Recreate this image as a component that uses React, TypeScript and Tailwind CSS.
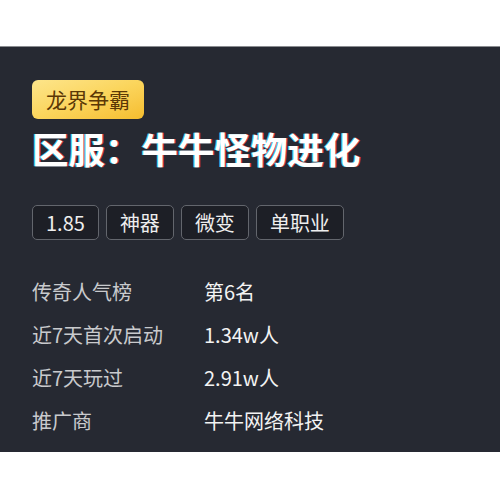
const TAGS = ["1.85", "神器", "微变", "单职业"];

const STATS: [string, string][] = [
  ["传奇人气榜", "第6名"],
  ["近7天首次启动", "1.34w人"],
  ["近7天玩过", "2.91w人"],
  ["推广商", "牛牛网络科技"],
];

export default function App() {
  return (
    <div className="h-[500px] w-[500px] bg-white pt-[46px] font-['Noto_Sans_CJK_SC','Noto_Sans',sans-serif]">
      <div className="border-t border-[#8a8c90] bg-[#262932] pb-[10px] pl-[32px] pt-[33px]">
        <div className="flex">
          <span className="flex h-[39px] items-center rounded-[6px] bg-gradient-to-br from-[#fde58a] via-[#fbd55c] to-[#f5bd2c] px-[14px] text-[21px] leading-none text-[#5b3806]">
            龙界争霸
          </span>
        </div>
        <h1 className="mt-[8px] h-[44px] text-[36.5px] font-bold leading-[44px] text-white [text-shadow:-1px_0_#35c7d8,1px_0_#d8364a]">
          区服：牛牛怪物进化
        </h1>
        <div className="mt-[34px] flex gap-[7px]">
          {TAGS.map((t) => (
            <span
              key={t}
              className="flex h-[35px] items-center rounded-[5px] border border-[#63666d] bg-[#1d1f26] px-[13px] text-[20px] leading-none text-[#eeeeee]"
            >
              {t}
            </span>
          ))}
        </div>
        <div className="mt-[30px] flex flex-col">
          {STATS.map(([k, v]) => (
            <div key={k} className="flex h-[43px] items-center text-[20px]">
              <span className="w-[172px] text-[#c9cacd]">{k}</span>
              <span className="text-[#f3f3f3]">{v}</span>
            </div>
          ))}
        </div>
      </div>
    </div>
  );
}
